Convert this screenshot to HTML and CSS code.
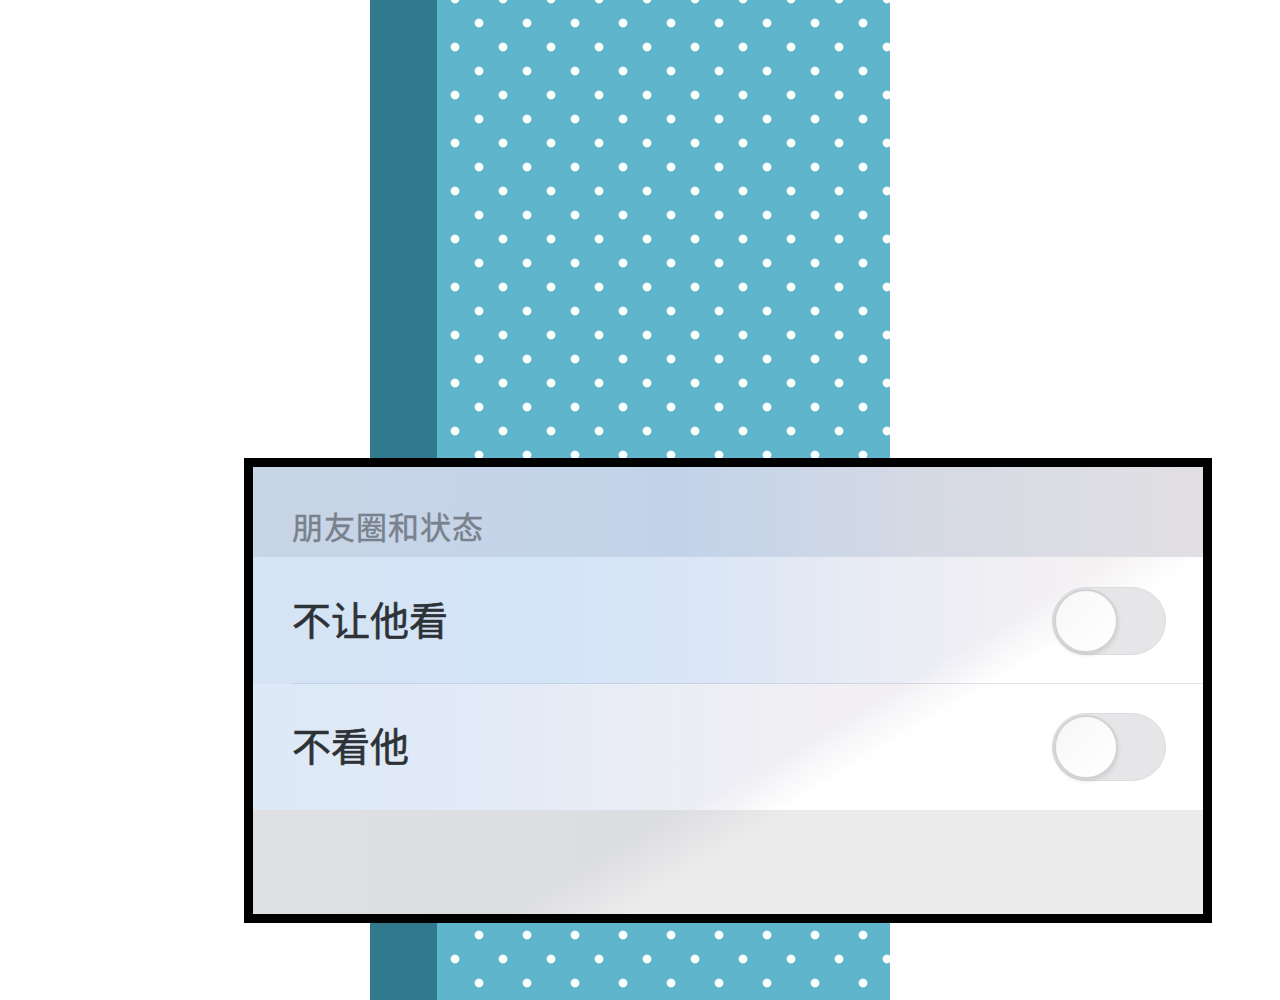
FILE: index.html
```html
<!DOCTYPE html>
<html lang="zh-CN">
<head>
    <meta charset="UTF-8">
    <meta name="viewport" content="width=device-width, initial-scale=1.0">
    <title>朋友圈和状态</title>
    <link rel="stylesheet" href="styles.css">
</head>
<body>
    <div class="stage">
        <div class="strip">
            <div class="strip-edge"></div>
            <div class="strip-dots"></div>
        </div>

        <section class="panel">
            <div class="panel-head">朋友圈和状态</div>

            <div class="row row-first">
                <span class="row-label">不让他看</span>
                <span class="switch"><span class="knob"></span></span>
            </div>

            <div class="row row-second">
                <span class="row-label">不看他</span>
                <span class="switch"><span class="knob"></span></span>
            </div>

            <div class="panel-foot"></div>
        </section>
    </div>
</body>
</html>
```

FILE: styles.css
```css
body { margin: 0; background: #fff; font-family: "Noto Sans CJK SC", "Noto Sans", sans-serif; }

/* page canvas: strip in the middle, framed card laid over it */
.stage { display: grid; grid-template-columns: 244px 126px 520px 322px 1fr; grid-template-rows: 458px 465px 1fr; height: 1000px; }

.strip { grid-column: 3; grid-row: 1 / 4; display: flex; }
.strip-edge { width: 67px; background: #317a8e; }
.strip-dots {
    flex: 1;
    background-color: #5eb5cc;
    background-image:
        radial-gradient(circle, #fff 3.6px, rgba(255,255,255,0) 5px),
        radial-gradient(circle, #fff 3.6px, rgba(255,255,255,0) 5px);
    background-size: 48px 48px;
    background-position: 18px -1px, -6px 23px;
}

.panel { grid-column: 2 / 5; grid-row: 2; display: flex; flex-direction: column; border: 9px solid #000; box-sizing: border-box; background: #eee; }

.panel-head {
    height: 90px;
    box-sizing: border-box;
    padding: 43px 0 0 39px;
    font-size: 31px;
    line-height: 31px;
    letter-spacing: 1px;
    color: #79818c;
    -webkit-text-stroke: 0.4px #79818c;
    background: linear-gradient(90deg, #c8d5e6 0%, #c2d3e9 45%, #d6dae4 72%, #e2dfe3 100%);
}

.row { height: 126px; display: flex; align-items: center; justify-content: space-between; padding: 0 37px 0 39px; }
.row-label { font-size: 39px; line-height: 1; color: #2d3237; -webkit-text-stroke: 0.6px #2d3237; margin-bottom: 5px; }

/* first row carries the hairline under it, inset like the label;
   a light sheen runs diagonally across the lower right */
.row-first {
    height: 127px;
    background:
        linear-gradient(rgba(140,160,185,.28), rgba(140,160,185,.28)) no-repeat 39px 100% / calc(100% - 39px) 1px,
        linear-gradient(149deg, rgba(255,255,255,0) 69.2%, #fff 72.4%) fixed,
        linear-gradient(90deg, #d6e4f4 0%, #d3e4f7 30%, #dbe6f6 48%, #e9ecf4 66%, #f3f0f3 85%, #f6f2f3 100%);
}
.row-second {
    background:
        linear-gradient(149deg, rgba(255,255,255,0) 69.2%, #fff 72.4%) fixed,
        linear-gradient(90deg, #dde9f7 0%, #e1eaf7 22%, #ebedf5 42%, #f1eff3 60%, #f2eff2 100%);
}

.panel-foot {
    flex: 1;
    background:
        linear-gradient(149deg, rgba(236,236,236,0) 68.8%, #ececec 73%) fixed,
        linear-gradient(90deg, #dfe0e4 0%, #dcdde1 40%, #e2e1e4 100%);
}

/* off-state toggle */
.switch { width: 114px; height: 68px; box-sizing: border-box; display: flex; align-items: center; padding: 1px; border-radius: 34px; background: #e6e6e8; border: 1px solid #dcdcde; }
.knob { width: 64px; height: 64px; box-sizing: border-box; border-radius: 50%; background: linear-gradient(135deg, #f7f7f8, #fff); border: 2px solid #d2d2d4; box-shadow: 0 2px 4px rgba(0,0,0,.12); }
```
